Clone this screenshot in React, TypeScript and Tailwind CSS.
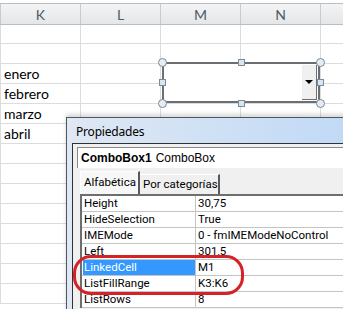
import React from "react";

const rows = ["", "", "enero", "febrero", "marzo", "abril", "", "", "", "", "", "", "", ""];

const props: [string, string, boolean?][] = [
  ["Height", "30,75"],
  ["HideSelection", "True"],
  ["IMEMode", "0 - fmIMEModeNoControl"],
  ["Left", "301,5"],
  ["LinkedCell", "M1", true],
  ["ListFillRange", "K3:K6"],
  ["ListRows", "8"],
];

function Handle({ round, x, y }: { round?: boolean; x: number; y: number }) {
  return round ? (
    <div
      className="absolute w-[9px] h-[9px] rounded-full border border-[#7d8a96] bg-[#e3edf3]"
      style={{ left: x - 4.5, top: y - 4.5 }}
    />
  ) : (
    <div
      className="absolute w-[7px] h-[7px] border border-[#7d8a96] bg-[#d6e6f2]"
      style={{ left: x - 3.5, top: y - 3.5 }}
    />
  );
}

export default function App() {
  return (
    <div className="relative w-[343px] h-[309px] overflow-hidden bg-white font-['Lato',sans-serif]">
      {/* Spreadsheet */}
      <div className="pt-[3px]">
        <div className="flex h-[22px] border-t border-b border-[#b9bcc0] bg-gradient-to-b from-[#f3f4f5] to-[#e4e6e8] text-[14px] text-[#505a64]">
          <div className="w-[1px] border-r border-[#c8cacc]" />
          {["K", "L", "M", "N"].map((c) => (
            <div key={c} className="w-[80px] shrink-0 border-r border-[#c8cacc] flex items-center justify-center">
              {c}
            </div>
          ))}
          <div className="flex-1" />
        </div>
        {rows.map((r, i) => (
          <div key={i} className={`flex ${i === 0 ? "h-[19px]" : "h-[20px]"} border-b border-[#dadcdd] text-[14px] text-black`}>
            <div className="w-[1px] border-r border-[#dadcdd]" />
            <div className="w-[80px] shrink-0 border-r border-[#dadcdd] pl-[3px] leading-[19px]">{r}</div>
            <div className="w-[80px] shrink-0 border-r border-[#dadcdd]" />
            <div className="w-[80px] shrink-0 border-r border-[#dadcdd]" />
            <div className="w-[80px] shrink-0 border-r border-[#dadcdd]" />
            <div className="flex-1" />
          </div>
        ))}
      </div>

      {/* ComboBox control */}
      <div className="absolute left-[162px] top-[62px] w-[158px] h-[41px] border-2 border-[#6b6e72] bg-white">
        <div className="absolute right-[1px] top-[1px] bottom-[1px] w-[15px] bg-[#f0f0f0] border-r border-b border-[#6b6e72] flex items-center justify-center">
          <div className="w-0 h-0 border-l-[4px] border-r-[4px] border-t-[4px] border-l-transparent border-r-transparent border-t-black" />
        </div>
      </div>
      <Handle round x={162} y={62} />
      <Handle round x={320} y={62} />
      <Handle round x={162} y={103} />
      <Handle round x={320} y={103} />
      <Handle x={241} y={62} />
      <Handle x={241} y={103} />
      <Handle x={162} y={82} />
      <Handle x={320} y={82} />

      {/* Properties dialog */}
      <div className="absolute left-[66px] top-[117px] w-[290px] h-[200px] border-l border-t border-[#4e5660] bg-gradient-to-r from-[#dfe8f3] to-[#c0d9f6] shadow-[0_-3px_4px_rgba(0,0,0,0.15)]">
        <div className="h-[25px] pl-[9px] pt-[3px] flex items-center text-[12px] tracking-[-0.2px] text-black font-['Noto_Sans',sans-serif]">
          Propiedades
        </div>
        <div className="ml-[5px] h-full border-l border-t border-[#2e3236] bg-[#f0f0f0] pl-[4px] pt-[3px] font-['Liberation_Sans',sans-serif] text-[12px] text-black">
          <div className="h-[21px] bg-white border-t border-l border-[#8a8a8a] flex items-center pl-[3px]">
            <span className="font-bold">ComboBox1</span>
            <span className="ml-[4px]">ComboBox</span>
          </div>
          <div className="flex h-[24px] mt-[2px] items-end pl-[3px] font-['Roboto',sans-serif] text-[11.5px] whitespace-nowrap">
            <div className="h-[23px] w-[60px] shrink-0 bg-[#f7f7f7] border-l border-t border-white border-r-2 border-r-[#5a5a5a] flex items-center pl-[3px]">
              Alfabética
            </div>
            <div className="h-[20px] w-[80px] shrink-0 bg-[#f0f0f0] border-t border-white border-r-2 border-r-[#5a5a5a] flex items-center pl-[3px]">
              Por categorías
            </div>
          </div>
          <div className="ml-[3px] border-t-2 border-l-2 border-t-[#6e6e6e] border-l-[#6e6e6e] bg-white font-['Roboto',sans-serif] text-[11.5px]">
            {props.map(([k, v, sel]) => (
              <div key={k} className="flex h-[16px] border-b border-[#c4c4c4] whitespace-nowrap">
                <div className="w-[114px] shrink-0 border-r border-[#c4c4c4] pl-[1px]">
                  <div className={`h-full pl-[1px] leading-[15px] ${sel ? "bg-[#3399ff] text-white" : ""}`}>{k}</div>
                </div>
                <div className="pl-[2px] leading-[15px]">{v}</div>
              </div>
            ))}
          </div>
        </div>
      </div>

      {/* Red annotation */}
      <div className="absolute left-[73px] top-[255px] w-[171px] h-[40px] border-[3px] border-[#d42226] rounded-[18px]" />
    </div>
  );
}
